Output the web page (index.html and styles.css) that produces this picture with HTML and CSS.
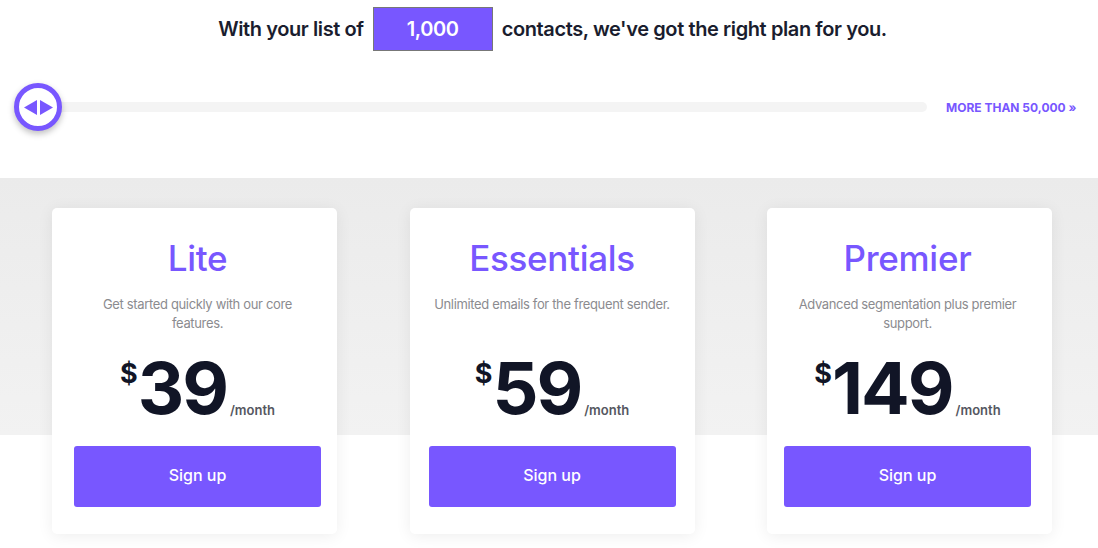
FILE: index.html
```html
<!DOCTYPE html>
<html lang="en">
<head>
<meta charset="utf-8">
<link rel="stylesheet" href="styles.css">
</head>
<body>
<header class="top">
  <div class="headline">
    <span>With your list of</span>
    <span class="count">1,000</span>
    <span>contacts, we've got the right plan for you.</span>
  </div>
  <div class="slider">
    <div class="track"></div>
    <div class="handle">
      <svg width="29" height="15" viewBox="0 0 29 15" aria-hidden="true">
        <polygon points="13,0 13,15 0,7.5" fill="#7857ff"/>
        <polygon points="16,0 16,15 29,7.5" fill="#7857ff"/>
      </svg>
    </div>
    <a class="more" href="#">MORE THAN 50,000 »</a>
  </div>
</header>
<section class="pricing">
  <div class="cards">
    <div class="card card-lite">
      <h2 class="name">Lite</h2>
      <p class="desc">Get started quickly with our core features.</p>
      <div class="price"><span class="cur">$</span><span class="amt">39</span><span class="per">/month</span></div>
      <a class="btn" href="#">Sign up</a>
    </div>
    <div class="card card-essentials">
      <h2 class="name">Essentials</h2>
      <p class="desc">Unlimited emails for the frequent sender.</p>
      <div class="price"><span class="cur">$</span><span class="amt">59</span><span class="per">/month</span></div>
      <a class="btn" href="#">Sign up</a>
    </div>
    <div class="card card-premier">
      <h2 class="name">Premier</h2>
      <p class="desc">Advanced segmentation plus premier support.</p>
      <div class="price"><span class="cur">$</span><span class="amt">149</span><span class="per">/month</span></div>
      <a class="btn" href="#">Sign up</a>
    </div>
  </div>
</section>
</body>
</html>
```
FILE: styles.css
```css
* { box-sizing: border-box; }
html, body { margin: 0; padding: 0; background: #fff; }
body {
  font-family: Inter, "Liberation Sans", sans-serif;
  color: #161a2b;
  width: 1098px;
  height: 548px;
  overflow: hidden;
}
.top { padding-top: 7px; height: 178px; }
.headline {
  display: flex;
  justify-content: center;
  align-items: center;
  gap: 9px;
  padding-left: 7px;
  font-size: 20px;
  font-weight: 600;
  letter-spacing: -0.4px;
  color: #1a1d2e;
}
.count {
  width: 120px;
  height: 44px;
  display: flex;
  align-items: center;
  justify-content: center;
  background: #7857ff;
  border: 1px solid #777;
  color: #fff;
  font-weight: 600;
}
.slider {
  position: relative;
  display: flex;
  align-items: center;
  height: 60px;
  margin-top: 26px;
  padding-left: 40px;
}
.track {
  width: 887px;
  height: 10px;
  background: #f4f4f4;
  border-radius: 5px;
}
.handle {
  position: absolute;
  left: 14px;
  top: 6px;
  width: 48px;
  height: 48px;
  border-radius: 50%;
  border: 5px solid #7857ff;
  background: #fff;
  box-shadow: 0 3px 6px rgba(0,0,0,0.25);
  display: flex;
  align-items: center;
  justify-content: center;
}
.handle svg { display: block; }
.more {
  margin-left: 19px;
  font-size: 12px;
  font-weight: 700;
  letter-spacing: 0;
  color: #7857ff;
  text-decoration: none;
  white-space: nowrap;
}
.pricing {
  background: linear-gradient(#ebebeb 0, #f2f2f2 257px, #fff 257px);
  padding-top: 30px;
  height: 370px;
}
.cards {
  display: flex;
  gap: 72.5px;
  padding-left: 52px;
}
.card {
  width: 285px;
  height: 326px;
  background: #fff;
  border-radius: 5px;
  box-shadow: 0 2px 16px rgba(0,0,0,0.07);
  padding: 28px 16px 0 22px;
  display: flex;
  flex-direction: column;
  align-items: center;
}
.card-essentials { padding-left: 19px; padding-right: 19px; }
.card-premier { padding-left: 17px; padding-right: 21px; }
.name {
  margin: 0;
  font-size: 35px;
  line-height: 44px;
  font-weight: 500;
  color: #7857ff;
  letter-spacing: -0.3px;
}
.desc {
  margin: 15px 0 0;
  font-size: 13px;
  line-height: 19px;
  letter-spacing: -0.35px;
  color: #8b8b8f;
  text-align: center;
  max-width: 236px;
  height: 38px;
}
.price {
  display: flex;
  align-items: flex-start;
  margin-top: 19px;
  height: 70px;
  color: #111526;
}
.cur {
  font-size: 27px;
  font-weight: 700;
  line-height: 1;
  margin-top: 8px;
}
.amt {
  font-size: 72px;
  font-weight: 700;
  line-height: 72px;
  letter-spacing: -2px;
}
.per {
  align-self: flex-end;
  font-size: 13px;
  font-weight: 600;
  color: #555761;
  margin-left: 3px;
  margin-bottom: 4px;
}
.btn {
  margin-top: 24px;
  width: 247px;
  height: 61px;
  border-radius: 3px;
  background: #7857ff;
  color: #fff;
  text-decoration: none;
  font-size: 16px;
  font-weight: 500;
  padding-bottom: 3px;
  display: flex;
  align-items: center;
  justify-content: center;
}
```
